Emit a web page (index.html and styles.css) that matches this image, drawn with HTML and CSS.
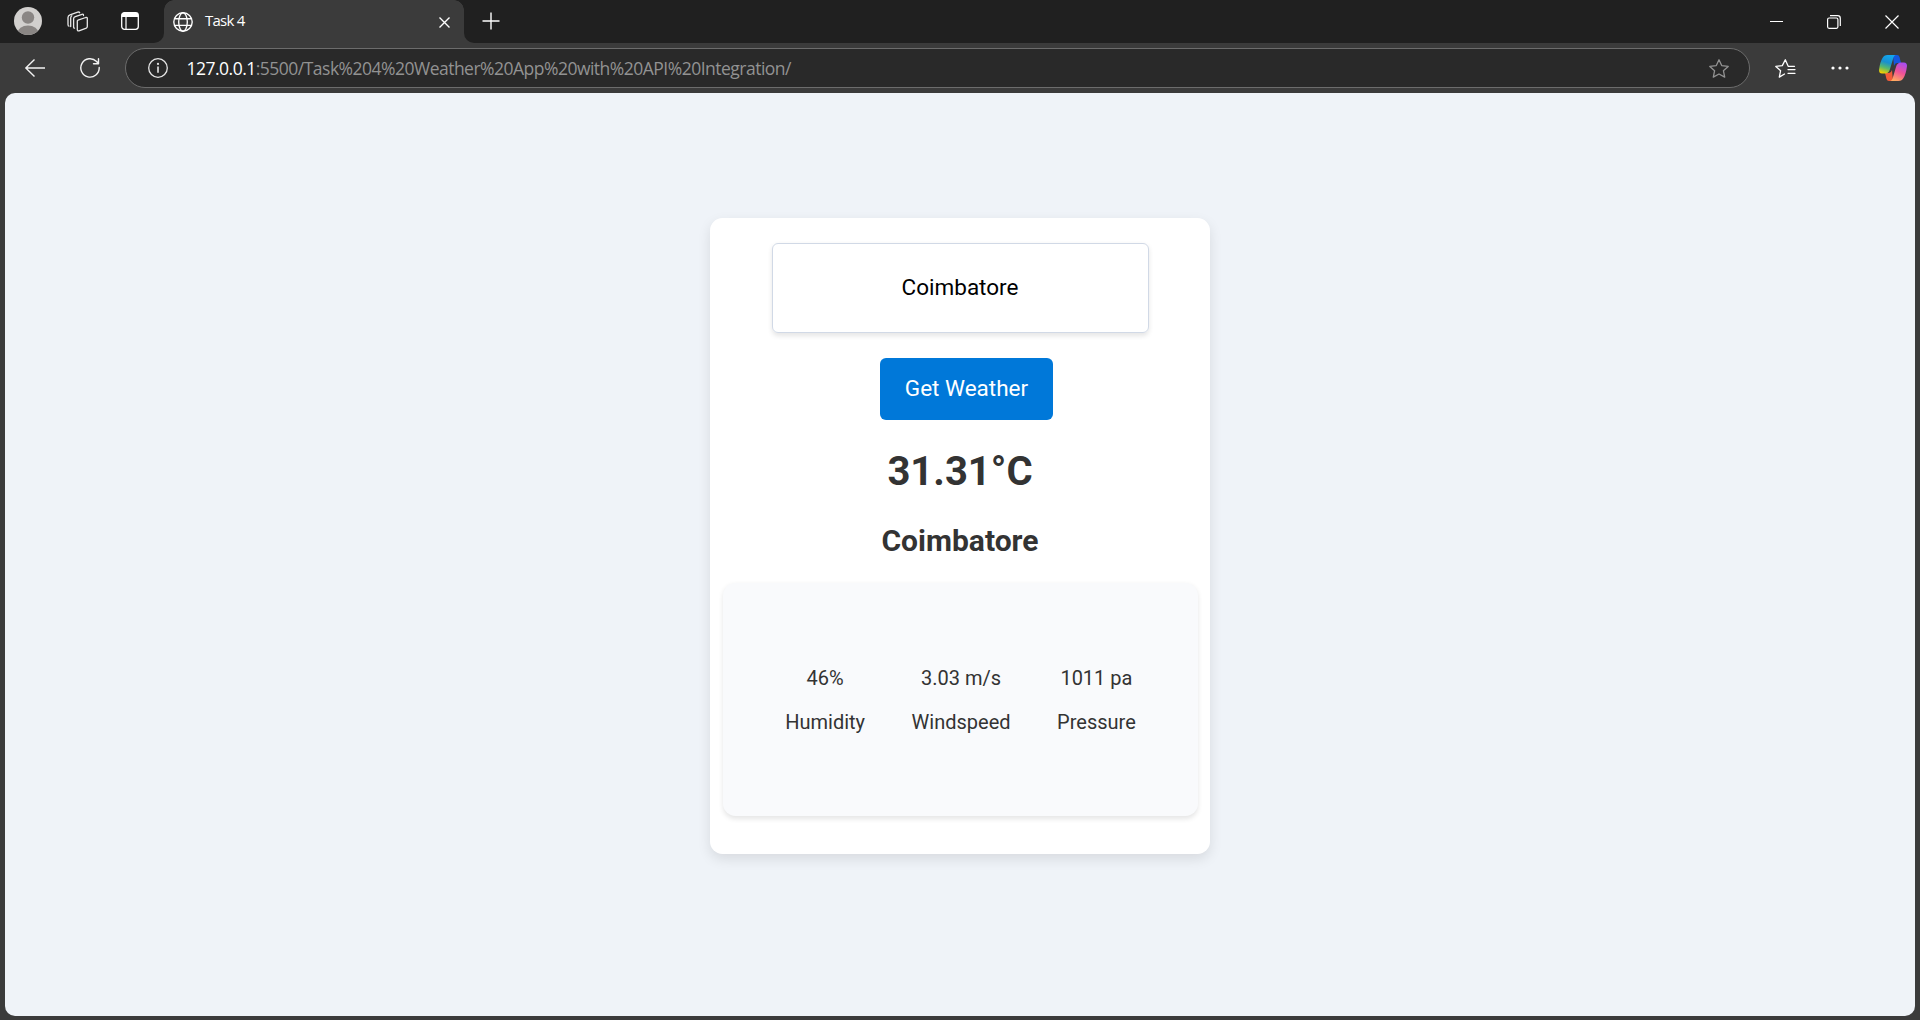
FILE: index.html
```html
<!DOCTYPE html>
<html lang="en">
<head>
<meta charset="utf-8">
<title>Task 4</title>
<link rel="stylesheet" href="styles.css">
</head>
<body>
<div class="browser">
  <header class="titlebar">
    <div class="title-tools">
      <svg class="avatar" width="28" height="28" viewBox="0 0 28 28"><defs><clipPath id="face"><circle cx="14" cy="14" r="14"/></clipPath></defs><circle cx="14" cy="14" r="14" fill="#d2d0ce"/><g clip-path="url(#face)" fill="#8a8684"><circle cx="14" cy="10.5" r="6.2"/><ellipse cx="14" cy="26" rx="10.5" ry="7.5"/></g></svg>
      <svg class="collections" width="22" height="22" viewBox="0 0 22 22" fill="none" stroke="#e8e8e8" stroke-width="1.3" stroke-linejoin="round" stroke-linecap="round"><path d="M11 9.200 18.800 6.500q1.500-.4 1.500 1.100v8q0 1.100-1 1.500l-7.300 2.700q-1.700.5-1.700-1.200V10.200q0-.8.7-1z"/><path d="M16.500 4.500V4.300q0-1.500-1.500-1L8.300 5.600Q6.600 6.200 6.600 7.700v8.500q0 1 .9 1"/><path d="M12.700 1.700q-.5-1-2-.5L3 3.800Q1 4.600 1 6.500v7q0 1.600 1 1.600"/><path d="M4.800 4.800Q3.700 5.500 3.700 7v8.500"/></svg>
      <svg class="tab-menu" width="18" height="18" viewBox="0 0 18 18"><rect x=".7" y=".7" width="16.600" height="16.600" rx="2.700" fill="none" stroke="#fff" stroke-width="1.300"/><path d="M.7 5V3Q.7.700 3 .7h12q2.300 0 2.300 2.300v2z" fill="#fff"/><path d="M5 5v12" stroke="#fff" stroke-width="1.200"/></svg>
    </div>
    <div class="tab">
      <svg width="20" height="20" viewBox="0 0 20 20" fill="none" stroke="#fff" stroke-width="1.350"><circle cx="10" cy="10" r="9.200"/><ellipse cx="10" cy="10" rx="4.300" ry="9.200"/><path d="M1.600 6.700h16.800M1.600 13.300h16.800"/></svg>
      <span class="tab-title">Task 4</span>
      <svg class="tab-close" width="11" height="11" viewBox="0 0 11 11" stroke="#fff" stroke-width="1.400"><path d="m.5.500 10 10m0-10-10 10"/></svg>
    </div>
    <svg class="new-tab" width="18" height="18" viewBox="0 0 18 18" stroke="#fff" stroke-width="1.400"><path d="M.5 9h17M9 .5v17"/></svg>
    <div class="window-controls">
      <svg width="13" height="13" viewBox="0 0 13 13" stroke="#fff"><path d="M0 6.500h13"/></svg>
      <svg width="14" height="14" viewBox="0 0 14 14" fill="none" stroke="#fff" stroke-width="1.200"><rect x=".6" y="3" width="10.300" height="10.300" rx="1.500"/><path d="M3 .7h7.600q2.700 0 2.700 2.700V11"/></svg>
      <svg width="14" height="14" viewBox="0 0 14 14" stroke="#fff" stroke-width="1.200"><path d="m.5.500 13 13m0-13-13 13"/></svg>
    </div>
  </header>
  <nav class="toolbar">
    <svg width="20" height="18" viewBox="0 0 20 18" fill="none" stroke="#f2f2f2" stroke-width="1.400" stroke-linejoin="round"><path d="M20 9H.8M9.500.600.8 9l8.700 8.400"/></svg>
    <svg class="reload" width="20" height="20" viewBox="0 0 20 20" fill="none" stroke="#f2f2f2" stroke-width="1.400" stroke-linecap="round" stroke-linejoin="round"><path d="M19.200 9.500A9.200 9.200 0 1 1 16.600 3.500L18.500 5.700M18.500.8v4.900h-5"/></svg>
    <div class="address">
      <svg width="20" height="20" viewBox="0 0 20 20" fill="none" stroke="#e6e6e6"><circle cx="10" cy="10" r="9.300" stroke-width="1.300"/><path d="M10 8.600v6.200" stroke-width="1.600"/><circle cx="10" cy="5.900" r="1.100" fill="#e6e6e6" stroke="none"/></svg>
      <div class="url"><span class="host">127.0.0.1</span><span class="path">:5500/Task%204%20Weather%20App%20with%20API%20Integration/</span></div>
      <svg class="star" width="20" height="19" viewBox="0 0 20 19" fill="none" stroke="#929292" stroke-width="1.300" stroke-linejoin="round"><path d="m10 .8 2.700 5.800 6.500.8-4.800 4.300 1.300 6.400L10 15l-5.700 3.100 1.300-6.400L.8 7.400l6.500-.8z"/></svg>
    </div>
    <div class="toolbar-actions">
      <svg width="21" height="19" viewBox="0 0 21 19" fill="none" stroke="#fff" stroke-width="1.300" stroke-linejoin="round" stroke-linecap="round"><path d="M19.500 7.300h-6.300L10.300.8 7.300 6.600.8 7.400l4.800 4.300-1.300 6.400L9.500 15M13 10.600h7M13 14.300h7"/></svg>
      <svg class="more" width="18" height="4" viewBox="0 0 18 4" fill="#fff"><circle cx="2" cy="2" r="1.600"/><circle cx="9" cy="2" r="1.600"/><circle cx="16" cy="2" r="1.600"/></svg>
      <svg width="28" height="26" viewBox="0 0 28 26"><defs>
        <linearGradient id="cool" x1=".6" y1="0" x2=".3" y2="1"><stop stop-color="#12a7ef"/><stop offset=".4" stop-color="#188fd0"/><stop offset=".7" stop-color="#58b96b"/><stop offset="1" stop-color="#f3cf00"/></linearGradient>
        <linearGradient id="warm" x1=".7" y1="0" x2=".3" y2="1"><stop stop-color="#a84df0"/><stop offset=".5" stop-color="#f05296"/><stop offset="1" stop-color="#ffac60"/></linearGradient></defs>
        <path d="M14 0h4q2 0 2.500 2l1.500 6h-4q-2 0-3 3z" fill="#1557df"/><path d="M14 26h-4q-2 0-2.500-2L6 18h4q2 0 3-3z" fill="#f25b38"/>
        <path d="M8.500 0H17q-2 0-3 4l-3 10q-1.200 4.500-5 4.500H3q-3 0-3-3.500Q1 7 3.500 3 5 0 8.500 0z" fill="url(#cool)"/>
        <path d="M19.500 26H11q2 0 3-4l3-10q1.200-4.500 5-4.500h3q3 0 3 3.500-1 8-3.500 12-1.500 3-5 3z" fill="url(#warm)"/></svg>
    </div>
  </nav>
  <main class="viewport">
    <section class="card">
      <div class="city-input">Coimbatore</div>
      <button class="search">Get Weather</button>
      <h1 class="temp">31.31°C</h1>
      <h2 class="city">Coimbatore</h2>
      <div class="details">
        <div class="detail"><p>46%</p><p>Humidity</p></div>
        <div class="detail"><p>3.03 m/s</p><p>Windspeed</p></div>
        <div class="detail"><p>1011 pa</p><p>Pressure</p></div>
      </div>
    </section>
  </main>
</div>
</body>
</html>
```
FILE: styles.css
```css
* { box-sizing: border-box; }
body { margin: 0; background: #3b3b3b; font-family: Roboto, sans-serif; }
svg { display: block; flex: none; }
h1, h2, p { margin: 0; }

.browser { display: flex; flex-direction: column; width: 1920px; height: 1020px; overflow: hidden; }

/* Title bar */
.titlebar { display: flex; height: 43px; background: #3b3b3b; }
.title-tools { display: flex; align-items: center; width: 164px; padding-left: 14px; background: #202020; border-bottom-right-radius: 10px; }
.avatar { margin-top: -1px; }
.collections { margin-left: 25px; }
.tab-menu { margin-left: 32px; margin-top: -1px; }
.tab { display: flex; align-items: center; width: 300px; padding: 1px 14px 0 9px; background: #3b3b3b; position: relative; }
.tab::before, .tab::after { content: ""; position: absolute; top: 0; width: 10px; height: 10px; }
.tab::before { left: 0; background: radial-gradient(circle at 100% 100%, #3b3b3b 9.5px, #202020 10px); }
.tab::after { right: 0; background: radial-gradient(circle at 0 100%, #3b3b3b 9.5px, #202020 10px); }
.tab-title { margin: -4px 0 0 12px; color: #fff; font: 15px/20px "Open Sans", sans-serif; letter-spacing: -.75px; }
.tab-close { margin-left: auto; }
.new-tab { box-sizing: content-box; padding: 12px 0 13px 18px; background: #202020; border-bottom-left-radius: 10px; }
.window-controls { display: flex; flex: 1; align-items: center; justify-content: flex-end; gap: 44px; padding-right: 21px; background: #202020; }

/* Toolbar */
.toolbar { display: flex; align-items: center; height: 50px; padding-left: 25px; background: #3b3b3b; }
.reload { margin-left: 35px; }
.address { display: flex; align-items: center; width: 1625px; height: 40px; margin-left: 25px; padding: 0 20px 0 22px; border: 1px solid #6c6c6c; border-radius: 20px; background: #292929; }
.url { margin: -1px 0 0 18.500px; font: 17.5px/24px "Open Sans", sans-serif; letter-spacing: -.51px; white-space: nowrap; }
.host { color: #fff; }
.path { color: #929292; }
.star { margin-left: auto; }
.toolbar-actions { display: flex; align-items: center; margin-left: 25px; }
.toolbar-actions .more { margin: 0 30px 0 35px; }

/* Page */
.viewport { display: flex; flex: 1; align-items: flex-start; justify-content: center; margin: 0 5px 4px; padding-top: 125px; border-radius: 10px; background: #eff3f8; }
.card { display: flex; flex-direction: column; align-items: center; width: 500px; height: 636px; padding-top: 25px; border-radius: 12.5px; background: #fff; color: #333; box-shadow: 0 5px 12.5px rgba(0, 0, 0, .1); }
.city-input { width: 377px; height: 90px; border: 1px solid #d1d9e6; border-radius: 6px; color: #000; font-size: 22.5px; line-height: 86px; text-align: center; box-shadow: 0 2.5px 5px rgba(0, 0, 0, .1); }
.search { width: 173px; height: 62px; margin: 25px 0 0 13px; padding: 0 0 2px; border: 0; border-radius: 6px; background: #0078d9; color: #fff; font: 22.5px Roboto, sans-serif; }
.temp { margin-top: 29px; font-size: 40px; line-height: 46px; }
.city { margin-top: 28px; font-size: 30px; line-height: 36px; }
.details { display: flex; justify-content: center; gap: 46.5px; width: 475px; height: 233px; margin: 24px 0 0 1px; padding-top: 83px; border-radius: 12.5px; background: #f9fafc; box-shadow: 0 2.5px 5px rgba(0, 0, 0, .1); font-size: 20px; line-height: 24px; text-align: center; }
.detail { display: flex; flex-direction: column; gap: 20px; }
```
